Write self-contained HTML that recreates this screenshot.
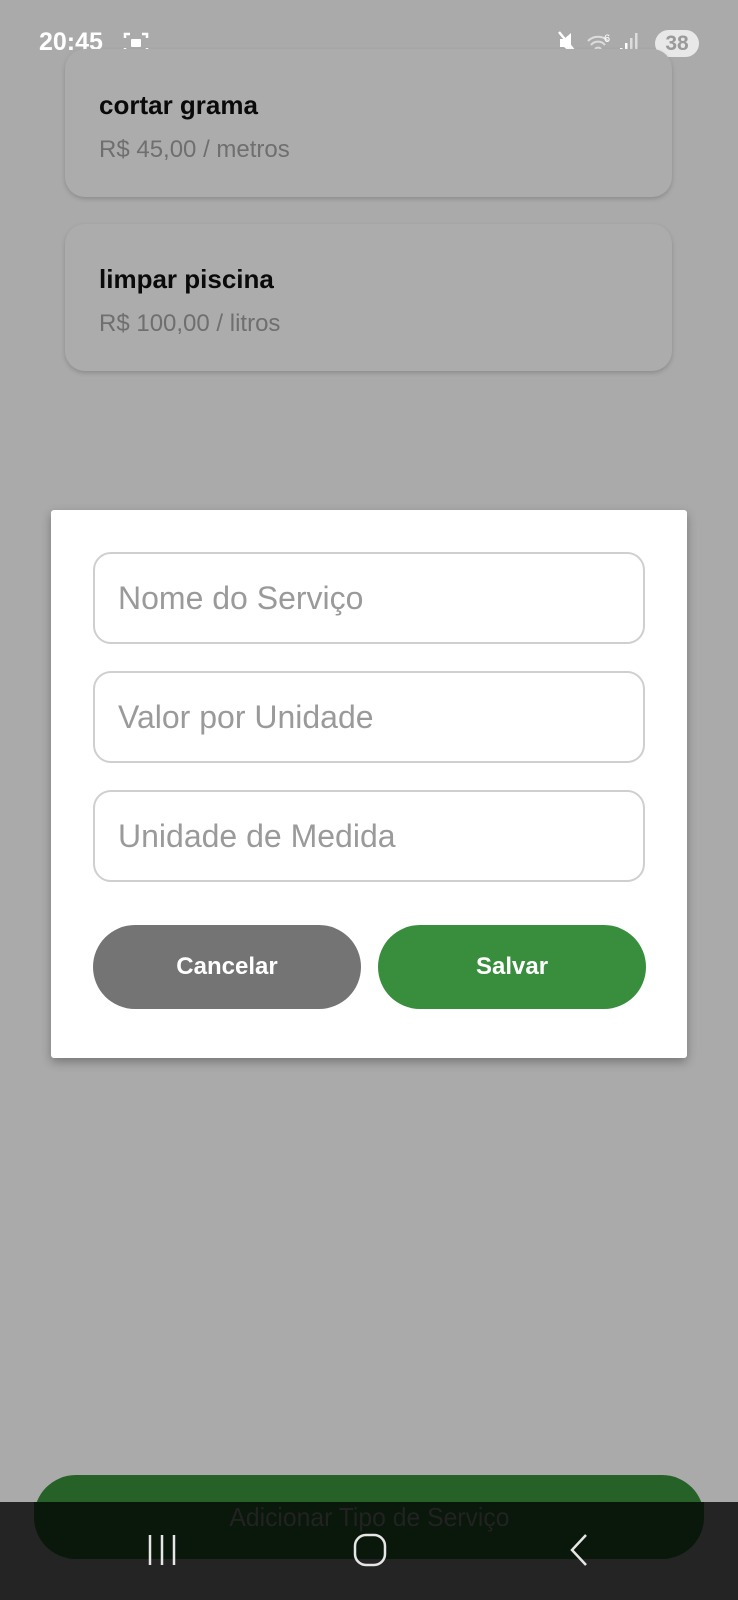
<!DOCTYPE html>
<html><head><meta charset="utf-8"><style>
*{margin:0;padding:0;box-sizing:border-box}
body{width:738px;height:1600px;background:#aaaaaa;position:relative;overflow:hidden;font-family:"Liberation Sans",sans-serif}
.abs{position:absolute}
.card{position:absolute;left:65px;width:607px;background:#acacac;border-radius:20px;box-shadow:0 2px 5px rgba(0,0,0,.18)}
.card .t{position:absolute;left:34px;font-size:26px;font-weight:bold;color:#0a0a0a}
.card .p{position:absolute;left:34px;font-size:24px;color:#6f6f6f}
.inp{position:absolute;left:93px;width:552px;height:92px;border:2px solid #cfcfcf;border-radius:18px;background:#fff}
.inp span{position:absolute;left:23px;top:26px;font-size:32px;color:#9a9a9a;line-height:36px}
.btn{position:absolute;top:925px;height:84px;width:268px;border-radius:42px;color:#fff;font-size:24px;font-weight:bold;text-align:center;line-height:84px}
</style></head><body>
<div class="abs" style="left:39px;top:28px;font-size:25px;font-weight:bold;color:#fff">20:45</div>
<svg class="abs" style="left:123px;top:31px" width="26" height="24" viewBox="0 0 26 24" fill="none" stroke="#fff" stroke-width="2.5"><path d="M2 7V3h5M19 3h5v4M24 17v4h-5M7 21H2v-4"/><rect x="8" y="8" width="10" height="8" rx="1" fill="#fff" stroke="none"/></svg>
<svg class="abs" style="left:558px;top:30px" width="88" height="26" viewBox="0 0 88 26"><path d="M2 9h4l7-6v20l-7-6H2z" fill="#fff"/><path d="M1 2l18 22" stroke="#fff" stroke-width="2.5"/><path d="M30 11a14 14 0 0 1 20 0M33 15a9 9 0 0 1 14 0M37 19a4 4 0 0 1 6 0" stroke="#ddd" stroke-width="2" fill="none"/><text x="46" y="12" font-size="11" fill="#fff" font-family="Liberation Sans">6</text><rect x="62" y="18" width="2.5" height="5" fill="#fff"/><rect x="67" y="13" width="2.5" height="10" fill="#fff"/><rect x="72" y="8" width="2.5" height="15" fill="#ddd"/><rect x="77" y="3" width="2.5" height="20" fill="#ddd"/></svg>
<div class="abs" style="left:655px;top:30px;width:44px;height:27px;border-radius:14px;background:#e8e8e8;color:#9a9a9a;font-size:21px;font-weight:bold;text-align:center;line-height:27px">38</div>

<div class="card" style="top:49px;height:148px"><div class="t" style="top:41px">cortar grama</div><div class="p" style="top:87px">R$ 45,00 / metros</div></div>
<div class="card" style="top:224px;height:147px"><div class="t" style="top:40px">limpar piscina</div><div class="p" style="top:86px">R$ 100,00 / litros</div></div>

<div class="abs" style="left:51px;top:510px;width:636px;height:548px;background:#fff;border-radius:3px;box-shadow:0 4px 10px rgba(0,0,0,.3)"></div>
<div class="inp" style="top:552px"><span>Nome do Serviço</span></div>
<div class="inp" style="top:671px"><span>Valor por Unidade</span></div>
<div class="inp" style="top:790px"><span>Unidade de Medida</span></div>
<div class="btn" style="left:93px;background:#747474">Cancelar</div>
<div class="btn" style="left:378px;background:#388e3c">Salvar</div>

<div class="abs" style="left:34px;top:1475px;width:670px;height:84px;border-radius:42px;background:#266128"></div>
<div class="abs" style="left:0;top:1502px;width:738px;height:98px;background:#242424"></div>
<div class="abs" style="left:34px;top:1502px;width:670px;height:57px;border-radius:0 0 42px 42px;background:#0a170b"></div>
<div class="abs" style="left:0;top:1502px;width:738px;text-align:center;font-size:26px;color:#222"><span style="display:inline-block;transform:scaleX(.95)">Adicionar Tipo de Serviço</span></div>
<svg class="abs" style="left:140px;top:1530px" width="480" height="40" viewBox="0 0 480 40" fill="none" stroke="#e6e6e6" stroke-width="2.5"><path d="M10 5v30M22 5v30M34 5v30"/><rect x="215" y="5" width="30" height="30" rx="11"/><path d="M446 5L432 20l14 15"/></svg>
</body></html>
